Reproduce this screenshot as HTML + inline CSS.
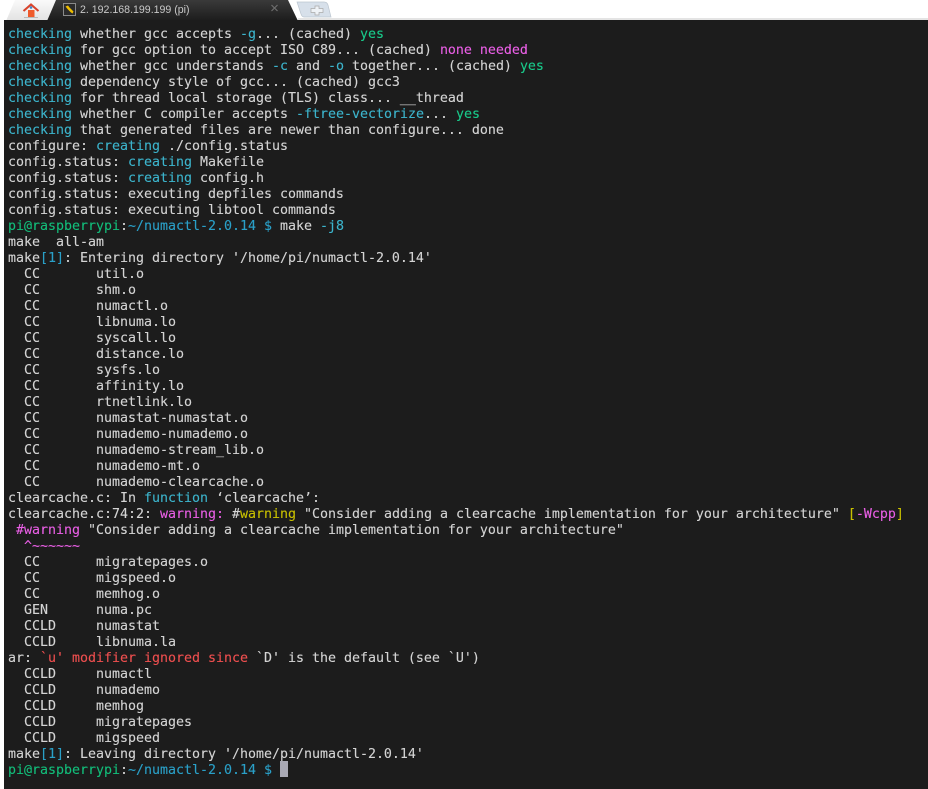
<!DOCTYPE html>
<html><head><meta charset="utf-8"><style>
html,body{margin:0;padding:0;background:#fff;width:928px;height:789px;overflow:hidden}
#t{position:absolute;left:4px;top:20px;width:924px;height:769px;background:#1c1c1c}
pre{position:absolute;left:8px;top:27px;margin:0;font:13.3px/16px "DejaVu Sans Mono",monospace;color:#d4d4d4;letter-spacing:-0.007px;white-space:pre;-webkit-text-stroke:.12px currentColor}
.c{color:#3cb4cc}.g{color:#19c98a}.m{color:#ea5fe6}.y{color:#c8c000}.r{color:#ef4f4f}.b{color:#2aa0c8}.p{color:#12bd7a}
svg{position:absolute;left:0;top:0}
.tt{position:absolute;left:80px;top:0.5px;font:10.6px/18px "Liberation Sans",sans-serif;color:#c8c8c8;white-space:pre}
</style></head><body>
<svg width="928" height="24" viewBox="0 0 928 24">
<defs>
<linearGradient id="a" x1="0" y1="0" x2="0" y2="1"><stop offset="0" stop-color="#3a3a3a"/><stop offset="1" stop-color="#1c1c1c"/></linearGradient>
<linearGradient id="h" x1="0" y1="0" x2="0" y2="1"><stop offset="0" stop-color="#fafafa"/><stop offset="1" stop-color="#e2e2e2"/></linearGradient>
</defs>
<path d="M6 21L15 0H56L47 21Z" fill="url(#h)"/>
<path d="M47 21L56 0H288L298 21Z" fill="url(#a)"/>
<path d="M297 2H324Q327 2 328 5L331 17H304Q302 17 301 14Z" fill="#d7e0ea" stroke="#bcc6d0" stroke-width=".7"/>
<path d="M311 8H315V5.500H319V8H323V12H319V14.500H315V12H311Z" transform="translate(0,.5)" fill="#eef2f6" stroke="#a9a9a9" stroke-width=".7"/>
<path d="M298 19H928" stroke="#c8c8c8" stroke-width="1"/>
<path d="M23.500 11L31 4.500L38.500 11" fill="none" stroke="#d9432b" stroke-width="2"/>
<rect x="28" y="10" width="6.500" height="7" fill="#ef5a2b"/>
<circle cx="31" cy="7.500" r="1.300" fill="#3f86c8"/>
<path d="M24 17.500H38" stroke="#b9b9b9" stroke-width="1"/>
<rect x="63.500" y="3.500" width="12" height="12" fill="#2b2b2b" stroke="#8a8a8a"/>
<path d="M65.500 6.500L68 5.500L69.500 7.500L73.500 11.500L72.500 13.500L71 12.500L67.500 9Z" fill="#efbe00"/>
<path d="M271.500 5L277.500 11M277.500 5L271.500 11" stroke="#6d6d6d" stroke-width="1.200"/>
</svg>
<div class="tt">2. 192.168.199.199 (pi)</div>
<div id="t"></div>
<pre><span class="c">checking</span> whether gcc accepts <span class="c">-g</span>... (cached) <span class="g">yes</span>
<span class="c">checking</span> for gcc option to accept ISO C89... (cached) <span class="m">none needed</span>
<span class="c">checking</span> whether gcc understands <span class="c">-c</span> and <span class="c">-o</span> together... (cached) <span class="g">yes</span>
<span class="c">checking</span> dependency style of gcc... (cached) gcc3
<span class="c">checking</span> for thread local storage (TLS) class... __thread
<span class="c">checking</span> whether C compiler accepts <span class="c">-ftree-vectorize</span>... <span class="g">yes</span>
<span class="c">checking</span> that generated files are newer than configure... done
configure: <span class="c">creating</span> ./config.status
config.status: <span class="c">creating</span> Makefile
config.status: <span class="c">creating</span> config.h
config.status: executing depfiles commands
config.status: executing libtool commands
<span class="p">pi@raspberrypi</span>:<span class="b">~/numactl-2.0.14 $</span> make <span class="c">-j8</span>
make  all-am
make<span class="b">[1]</span>: Entering directory '/home/pi/numactl-2.0.14'
  CC       util.o
  CC       shm.o
  CC       numactl.o
  CC       libnuma.lo
  CC       syscall.lo
  CC       distance.lo
  CC       sysfs.lo
  CC       affinity.lo
  CC       rtnetlink.lo
  CC       numastat-numastat.o
  CC       numademo-numademo.o
  CC       numademo-stream_lib.o
  CC       numademo-mt.o
  CC       numademo-clearcache.o
clearcache.c: In <span class="c">function</span> ‘clearcache’:
clearcache.c:74:2: <span class="m">warning:</span> #<span class="y">warning</span> "Consider adding a clearcache implementation for your architecture" <span class="y">[</span><span class="m">-Wcpp</span><span class="y">]</span>
 <span class="m">#warning</span> "Consider adding a clearcache implementation for your architecture"
  <span class="m">^~~~~~~</span>
  CC       migratepages.o
  CC       migspeed.o
  CC       memhog.o
  GEN      numa.pc
  CCLD     numastat
  CCLD     libnuma.la
ar: <span class="r">`u' modifier ignored since</span> `D' is the default (see `U')
  CCLD     numactl
  CCLD     numademo
  CCLD     memhog
  CCLD     migratepages
  CCLD     migspeed
make<span class="b">[1]</span>: Leaving directory '/home/pi/numactl-2.0.14'
<span class="p">pi@raspberrypi</span>:<span class="b">~/numactl-2.0.14 $</span> </pre>
<div style="position:absolute;left:280px;top:761px;width:8px;height:16px;background:#a9a9b4"></div>
</body></html>
